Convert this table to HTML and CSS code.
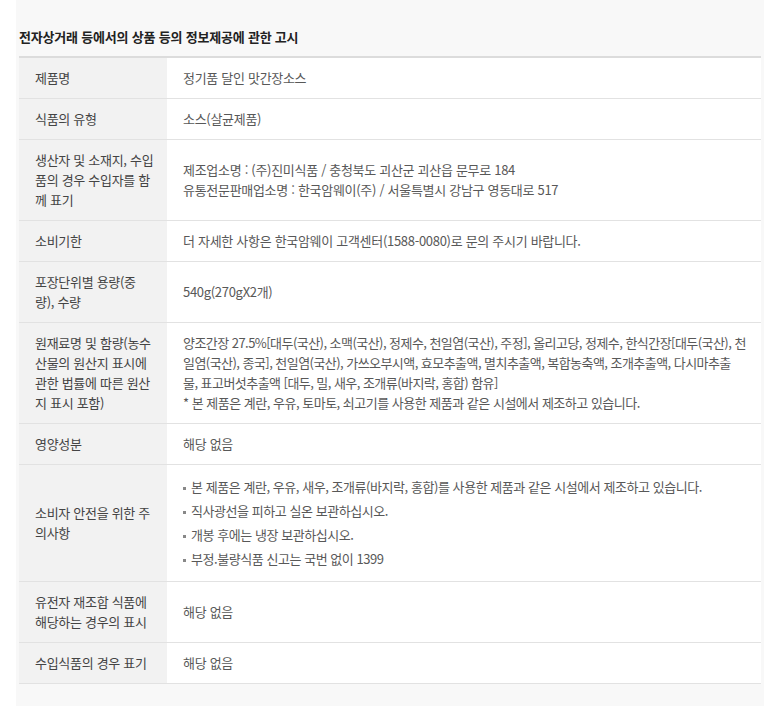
FILE: index.html
```html
<!DOCTYPE html>
<html lang="ko">
<head>
<meta charset="utf-8">
<title>상품정보제공 고시</title>
<link rel="stylesheet" href="styles.css">
</head>
<body>
<div class="notice">
  <h3 class="notice-title">전자상거래 등에서의 상품 등의 정보제공에 관한 고시</h3>
  <table class="info-table">
    <tbody>
      <tr><th>제품명</th><td>정기품 달인 맛간장소스</td></tr>
      <tr><th>식품의 유형</th><td>소스(살균제품)</td></tr>
      <tr><th>생산자 및 소재지, 수입<br>품의 경우 수입자를 함<br>께 표기</th><td>제조업소명 : (주)진미식품 / 충청북도 괴산군 괴산읍 문무로 184<br>유통전문판매업소명 : 한국암웨이(주) / 서울특별시 강남구 영동대로 517</td></tr>
      <tr><th>소비기한</th><td>더 자세한 사항은 한국암웨이 고객센터(1588-0080)로 문의 주시기 바랍니다.</td></tr>
      <tr><th>포장단위별 용량(중<br>량), 수량</th><td>540g(270gX2개)</td></tr>
      <tr><th>원재료명 및 함량(농수<br>산물의 원산지 표시에<br>관한 법률에 따른 원산<br>지 표시 포함)</th><td><span class="ingredients">양조간장 27.5%[대두(국산), 소맥(국산), 정제수, 천일염(국산), 주정], 올리고당, 정제수, 한식간장[대두(국산), 천<br>일염(국산), 종국], 천일염(국산), 가쓰오부시액, 효모추출액, 멸치추출액, 복합농축액, 조개추출액, 다시마추출<br>물, 표고버섯추출액 [대두, 밀, 새우, 조개류(바지락, 홍합) 함유]</span><br><span class="note">* 본 제품은 계란, 우유, 토마토, 쇠고기를 사용한 제품과 같은 시설에서 제조하고 있습니다.</span></td></tr>
      <tr><th>영양성분</th><td>해당 없음</td></tr>
      <tr><th>소비자 안전을 위한 주<br>의사항</th><td>
        <ul class="caution">
          <li>본 제품은 계란, 우유, 새우, 조개류(바지락, 홍합)를 사용한 제품과 같은 시설에서 제조하고 있습니다.</li>
          <li>직사광선을 피하고 실온 보관하십시오.</li>
          <li>개봉 후에는 냉장 보관하십시오.</li>
          <li>부정.불량식품 신고는 국번 없이 1399</li>
        </ul>
      </td></tr>
      <tr><th>유전자 재조합 식품에<br>해당하는 경우의 표시</th><td>해당 없음</td></tr>
      <tr><th>수입식품의 경우 표기</th><td>해당 없음</td></tr>
    </tbody>
  </table>
</div>
</body>
</html>
```

FILE: styles.css
```css
html, body {
  margin: 0;
  padding: 0;
  background: #ffffff;
}

body {
  font-family: "Noto Sans CJK KR", "Noto Sans", sans-serif;
  height: 706px;
}

.notice {
  margin: 0 16px;
  padding: 27px 3px 0;
  background: #f8f8f8;
  min-height: 679px;
}

.notice-title {
  margin: 0 0 9px;
  font-size: 13px;
  line-height: 20px;
  font-weight: 700;
  letter-spacing: -0.2px;
  color: #222;
}

.info-table {
  width: 100%;
  border-collapse: collapse;
  border-top: 2px solid #dcdcdc;
  table-layout: fixed;
}

.info-table th,
.info-table td {
  border-bottom: 1px solid #e2e2e2;
  padding: 10px 16px;
  font-size: 13px;
  line-height: 20px;
  letter-spacing: -0.3px;
  vertical-align: middle;
  text-align: left;
}

.info-table th {
  width: 120px;
  padding-right: 12px;
  background: #f2f2f2;
  color: #444;
  font-weight: 400;
  white-space: nowrap;
}

.info-table td {
  background: #ffffff;
  color: #585858;
}

.ingredients {
  letter-spacing: -0.55px;
  white-space: nowrap;
}

.note {
  letter-spacing: -0.5px;
}

.caution {
  list-style: none;
  margin: 0;
  padding: 0;
}

.caution li {
  padding: 2px 0;
  letter-spacing: -0.45px;
}

.caution li::before {
  content: "";
  display: inline-block;
  width: 3px;
  height: 3px;
  margin: 0 5px 0 0;
  background: #888;
  vertical-align: middle;
}
```
